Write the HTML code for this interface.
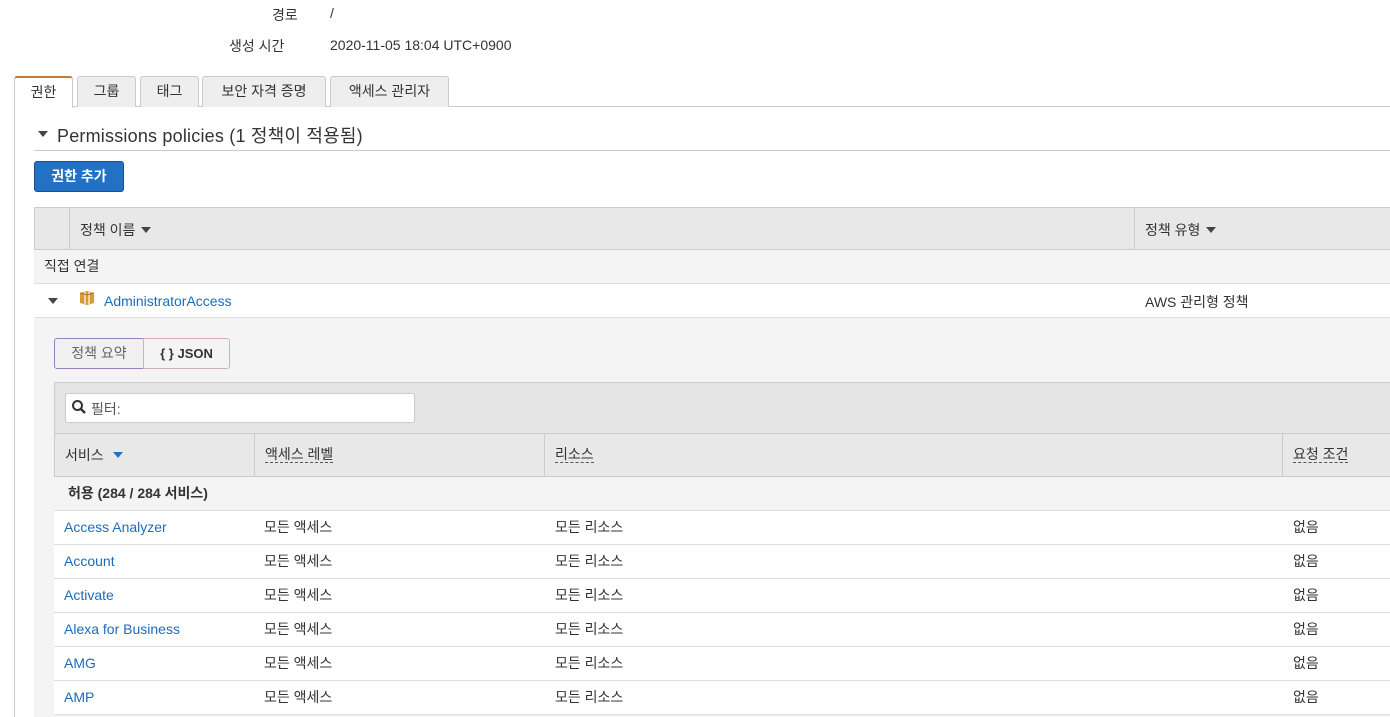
<!DOCTYPE html>
<html><head><meta charset="utf-8"><style>
*{box-sizing:border-box;margin:0;padding:0}
body{width:1390px;height:717px;overflow:hidden;background:#fff;font-family:"Liberation Sans","Noto Sans CJK KR",sans-serif;font-size:14px;color:#333;position:relative}
.a{position:absolute}
.lnk{color:#1e6bb8}
.tab{position:absolute;top:76px;height:31px;border:1px solid #ccc;border-bottom:none;background:#eee;border-radius:3px 3px 0 0;text-align:center;line-height:29px;font-size:14px}
.row{position:absolute;left:54px;width:1336px;height:34px;border-bottom:1px solid #ddd;background:#fff;font-size:14px;line-height:33px}
.row span{position:absolute}
.dash{border-bottom:1px dashed #555;line-height:16px}
.tri{display:inline-block;width:0;height:0;border:5px solid transparent;border-top:6px solid #444;vertical-align:-3px;margin-left:6px}
</style></head><body>
<div class="a" style="left:272px;top:5px">경로</div>
<div class="a" style="left:330px;top:5px">/</div>
<div class="a" style="left:229px;top:36px">생성 시간</div>
<div class="a" style="left:330px;top:37px">2020-11-05 18:04 UTC+0900</div>

<div class="a" style="left:14px;top:106px;width:1376px;border-top:1px solid #ccc"></div>
<div class="a" style="left:14px;top:106px;height:611px;border-left:1px solid #ccc"></div>
<div class="tab" style="left:14px;width:59px;background:#fff;height:32px;border-top:2px solid #c87a2e">권한</div>
<div class="tab" style="left:77px;width:59px">그룹</div>
<div class="tab" style="left:140px;width:59px">태그</div>
<div class="tab" style="left:202px;width:124px">보안 자격 증명</div>
<div class="tab" style="left:330px;width:119px">액세스 관리자</div>

<div class="a" style="left:38px;top:131px;width:0;height:0;border:5px solid transparent;border-top:6px solid #444"></div>
<div class="a" style="left:57px;top:122px;font-size:18px;letter-spacing:0.2px">Permissions policies (1 정책이 적용됨)</div>
<div class="a" style="left:34px;top:150px;width:1356px;border-top:1px solid #ccc"></div>
<div class="a" style="left:34px;top:161px;width:90px;height:31px;background:#2371c4;border:1px solid #1a4f8c;border-radius:3px;color:#fff;font-weight:bold;text-align:center;line-height:29px">권한 추가</div>

<div class="a" style="left:34px;top:207px;width:1356px;height:43px;background:#e8e8e8;border:1px solid #ccc;border-right:none"></div>
<div class="a" style="left:69px;top:208px;height:41px;border-left:1px solid #ccc"></div>
<div class="a" style="left:1134px;top:208px;height:41px;border-left:1px solid #ccc"></div>
<div class="a" style="left:80px;top:220px">정책 이름<span class="tri"></span></div>
<div class="a" style="left:1145px;top:220px">정책 유형<span class="tri"></span></div>
<div class="a" style="left:34px;top:250px;width:1356px;height:34px;background:#f4f4f4;border-bottom:1px solid #ddd;padding-left:10px;line-height:32px">직접 연결</div>
<div class="a" style="left:34px;top:284px;width:1356px;height:34px;border-bottom:1px solid #ddd"></div>
<div class="a" style="left:48px;top:298px;border:5px solid transparent;border-top:6px solid #444"></div>
<svg class="a" style="left:79px;top:290px" width="16" height="16" viewBox="0 0 16 16"><path d="M1 3 L8 1 L15 3 L15 13 L8 15 L1 13Z" fill="#d99a3a"/><path d="M6 2 L6 14 M10 2 L10 14" stroke="#fff" stroke-width="1.2"/><path d="M1 3 L8 5 L15 3" stroke="#b07020" fill="none"/></svg>
<div class="a lnk" style="left:104px;top:293px">AdministratorAccess</div>
<div class="a" style="left:1145px;top:292px">AWS 관리형 정책</div>

<div class="a" style="left:34px;top:318px;width:1356px;height:399px;background:#f4f4f4"></div>
<div class="a" style="left:54px;top:338px;width:90px;height:31px;border:1px solid #9b7fbf;border-radius:3px 0 0 3px;background:#f0f0f0;color:#666;text-align:center;line-height:29px">정책 요약</div>
<div class="a" style="left:143px;top:338px;width:87px;height:31px;border:1px solid #d0b0c0;border-radius:0 3px 3px 0;background:#f4f4f4;font-weight:bold;text-align:center;line-height:29px;font-size:13px">{ } JSON</div>

<div class="a" style="left:54px;top:382px;width:1336px;height:52px;background:#e4e4e4;border:1px solid #ccc;border-right:none"></div>
<div class="a" style="left:65px;top:393px;width:350px;height:30px;background:#fff;border:1px solid #ccc;border-radius:3px"></div>
<svg class="a" style="left:71px;top:399px" width="16" height="16" viewBox="0 0 16 16"><circle cx="6.5" cy="6.5" r="4.5" stroke="#333" stroke-width="2" fill="none"/><path d="M10 10 L14 14" stroke="#333" stroke-width="2.5"/></svg>
<div class="a" style="left:91px;top:399px;color:#555">필터:</div>
<div class="a" style="left:54px;top:434px;width:1336px;height:43px;background:#e8e8e8;border:1px solid #ccc;border-top:none;border-right:none"></div>
<div class="a" style="left:254px;top:434px;height:42px;border-left:1px solid #ccc"></div>
<div class="a" style="left:544px;top:434px;height:42px;border-left:1px solid #ccc"></div>
<div class="a" style="left:1282px;top:434px;height:42px;border-left:1px solid #ccc"></div>
<div class="a" style="left:65px;top:445px">서비스<span class="tri" style="border-top-color:#2371c4;margin-left:9px"></span></div>
<div class="a dash" style="left:265px;top:446px">액세스 레벨</div>
<div class="a dash" style="left:555px;top:446px">리소스</div>
<div class="a dash" style="left:1293px;top:446px">요청 조건</div>
<div class="row" style="top:477px;background:#f4f4f4"><span style="left:14px;font-weight:bold">허용 (284 / 284 서비스)</span></div>
<div class="row" style="top:511px"><span class="lnk" style="left:10px">Access Analyzer</span><span style="left:210px">모든 액세스</span><span style="left:501px">모든 리소스</span><span style="left:1239px">없음</span></div>
<div class="row" style="top:545px"><span class="lnk" style="left:10px">Account</span><span style="left:210px">모든 액세스</span><span style="left:501px">모든 리소스</span><span style="left:1239px">없음</span></div>
<div class="row" style="top:579px"><span class="lnk" style="left:10px">Activate</span><span style="left:210px">모든 액세스</span><span style="left:501px">모든 리소스</span><span style="left:1239px">없음</span></div>
<div class="row" style="top:613px"><span class="lnk" style="left:10px">Alexa for Business</span><span style="left:210px">모든 액세스</span><span style="left:501px">모든 리소스</span><span style="left:1239px">없음</span></div>
<div class="row" style="top:647px"><span class="lnk" style="left:10px">AMG</span><span style="left:210px">모든 액세스</span><span style="left:501px">모든 리소스</span><span style="left:1239px">없음</span></div>
<div class="row" style="top:681px"><span class="lnk" style="left:10px">AMP</span><span style="left:210px">모든 액세스</span><span style="left:501px">모든 리소스</span><span style="left:1239px">없음</span></div>
</body></html>
